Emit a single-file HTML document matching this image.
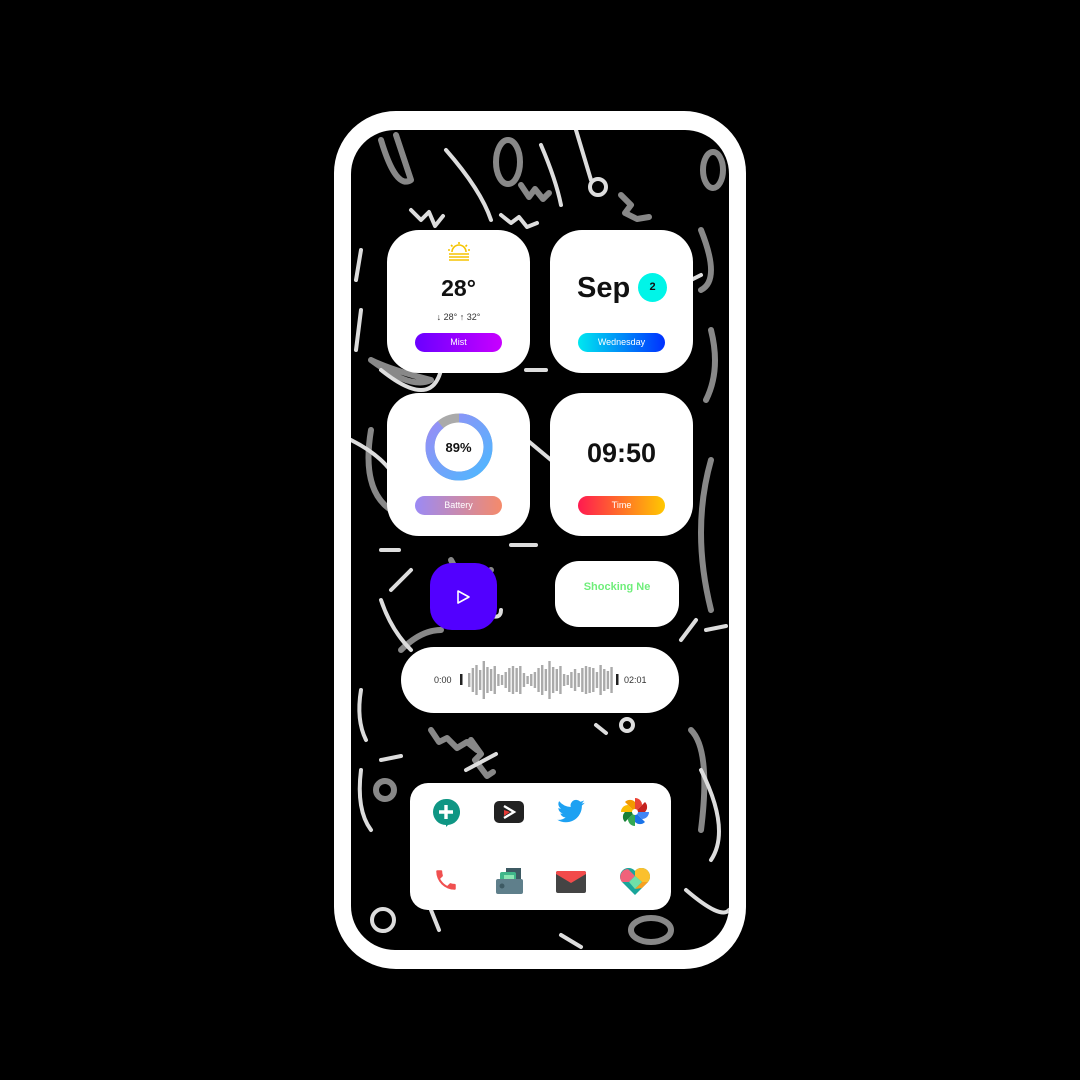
<!DOCTYPE html>
<html><head><meta charset="utf-8"><style>
*{margin:0;padding:0;box-sizing:border-box}
body{width:1080px;height:1080px;background:#000;position:relative;overflow:hidden;font-family:"Liberation Sans",sans-serif}
.frame{position:absolute;left:334px;top:111px;width:412px;height:858px;background:#fff;border-radius:62px}
.screen{position:absolute;left:351px;top:130px;width:378px;height:820px;background:#000;border-radius:44px;overflow:hidden}
.w{position:absolute;background:#fff;border-radius:32px}
.pill{position:absolute;left:28px;width:87px;height:19px;border-radius:10px;color:#fff;font-size:9px;text-align:center;line-height:19px}
.abs{position:absolute}
</style></head><body>
<div class="frame"></div>
<div class="screen">
<svg width="378" height="820" style="position:absolute;left:0;top:0" fill="none" stroke-linecap="round" stroke-linejoin="round">
<g stroke="#888" stroke-width="6">
<path d="M30 10 Q45 60 60 50 Q50 20 45 5"/>
<ellipse cx="157" cy="32" rx="12" ry="22"/>
<path d="M170 55 l8 12 l6 -8 l8 10 l6 -6"/>
<path d="M270 65 l10 10 l-6 8 l12 6 l12 -2"/>
<ellipse cx="362" cy="40" rx="10" ry="18"/>
<path d="M350 100 Q370 150 350 160"/>
<path d="M20 230 Q60 260 80 250 Q40 240 20 230"/>
<path d="M360 200 Q370 240 355 270"/>
<path d="M20 300 Q10 360 40 380"/>
<path d="M50 520 Q70 500 90 500"/>
<path d="M120 610 l10 14 l-6 6 l12 16 l6 -4"/>
<path d="M230 450 l10 20 l-4 6 l12 12"/>
<circle cx="34" cy="660" r="9"/>
<path d="M80 600 l8 12 l8 -4 l10 10 l10 -6 l10 8"/>
<path d="M340 600 Q360 620 350 700"/>
<path d="M360 330 Q340 400 360 480"/>
<path d="M100 430 Q120 470 140 440"/>
<ellipse cx="300" cy="800" rx="20" ry="12"/>
</g>
<g stroke="#ddd" stroke-width="4">
<path d="M95 20 Q130 60 140 90"/>
<path d="M190 15 Q205 50 210 75"/>
<path d="M225 0 L240 50"/>
<circle cx="247" cy="57" r="8"/>
<path d="M60 80 l10 10 l8 -8 l6 14 l8 -10"/>
<path d="M150 85 l10 8 l8 -6 l8 10 l10 -4"/>
<path d="M10 120 L5 150"/>
<path d="M10 180 L5 220"/>
<path d="M30 240 Q80 280 90 240"/>
<path d="M170 305 l30 25"/>
<path d="M0 310 Q40 330 50 360"/>
<path d="M30 420 l18 0"/>
<path d="M160 415 l25 0"/>
<path d="M60 440 l-20 20"/>
<path d="M30 470 Q40 500 60 520"/>
<path d="M100 460 Q150 500 150 480"/>
<path d="M330 510 l15 -20"/>
<path d="M10 560 Q5 590 15 610"/>
<path d="M10 640 Q5 680 20 700"/>
<path d="M30 630 l20 -4"/>
<path d="M115 640 l30 -16"/>
<path d="M245 595 l10 8"/>
<circle cx="276" cy="595" r="6"/>
<path d="M350 640 Q380 700 360 730"/>
<path d="M335 760 Q370 790 378 780"/>
<path d="M300 700 L310 740"/>
<circle cx="32" cy="790" r="11"/>
<path d="M210 805 l20 12"/>
<path d="M80 780 l8 20"/>
<path d="M340 150 l10 -5"/>
<path d="M175 240 l20 0"/>
<path d="M355 500 l20 -4"/>
</g>
</svg>

<div class="w" style="left:36px;top:100px;width:143px;height:143px">
<svg class="abs" style="left:61px;top:12px" width="22" height="20" viewBox="0 0 22 20" stroke="#f5c400" stroke-width="1.6" fill="none"><path d="M4 10a7 7 0 0 1 14 0"/><path d="M11 0v2M3 3l1.5 1.5M19 3l-1.5 1.5M0 8h2M20 8h2"/><path d="M1 12h20M1 15h20M1 18h20"/></svg>
<div class="abs" style="left:0;width:143px;top:45px;text-align:center;font-weight:bold;font-size:23px;color:#111">28°</div>
<div class="abs" style="left:0;width:143px;top:82px;text-align:center;font-size:9px;color:#333">↓ 28° ↑ 32°</div>
<div class="pill" style="top:103px;background:linear-gradient(90deg,#6a00ff,#c800ff)">Mist</div>
</div>
<div class="w" style="left:199px;top:100px;width:143px;height:143px">
<div class="abs" style="left:27px;top:42px;font-weight:bold;font-size:29px;color:#111">Sep</div>
<div class="abs" style="left:88px;top:43px;width:29px;height:29px;border-radius:50%;background:#00f5e8;text-align:center;line-height:29px;font-weight:bold;font-size:11px;color:#111">2</div>
<div class="pill" style="top:103px;background:linear-gradient(90deg,#00e8f0,#0030ff)">Wednesday</div>
</div>
<div class="w" style="left:36px;top:263px;width:143px;height:143px">
<svg class="abs" style="left:38px;top:20px" width="68" height="68" viewBox="0 0 68 68"><defs><linearGradient id="bg" x1="0" y1="1" x2="1" y2="0"><stop offset="0" stop-color="#4db8ff"/><stop offset="1" stop-color="#9a8cf5"/></linearGradient></defs><circle cx="34" cy="34" r="29" fill="none" stroke="#aaa" stroke-width="9"/><circle cx="34" cy="34" r="29" fill="none" stroke="url(#bg)" stroke-width="9" stroke-dasharray="162 200" transform="rotate(-90 34 34)"/></svg>
<div class="abs" style="left:0;width:143px;top:47px;text-align:center;font-weight:bold;font-size:13px;color:#111">89%</div>
<div class="pill" style="top:103px;background:linear-gradient(90deg,#9b8af5,#f58a6a)">Battery</div>
</div>
<div class="w" style="left:199px;top:263px;width:143px;height:143px">
<div class="abs" style="left:0;width:143px;top:45px;text-align:center;font-weight:bold;font-size:27px;color:#111">09:50</div>
<div class="pill" style="top:103px;background:linear-gradient(90deg,#ff1a50,#ffc800)">Time</div>
</div>
<div class="abs" style="left:79px;top:433px;width:67px;height:67px;border-radius:22px;background:#5200ff">
<svg class="abs" style="left:26px;top:26px" width="15" height="16" viewBox="0 0 15 16"><path d="M2 2L13 8 2 14Z" fill="none" stroke="#fff" stroke-width="1.6" stroke-linejoin="round"/></svg>
</div>
<div class="w" style="left:204px;top:431px;width:124px;height:66px;border-radius:24px">
<div class="abs" style="left:0;width:124px;top:20px;text-align:center;font-weight:bold;font-size:11px;color:#6fee7a">Shocking Ne</div>
</div>
<div class="w" style="left:50px;top:517px;width:278px;height:66px;border-radius:33px">
<div class="abs" style="left:33px;top:28px;font-size:9px;color:#333">0:00</div>
<div class="abs" style="left:223px;top:28px;font-size:9px;color:#333">02:01</div>
<svg class="abs" style="left:58px;top:13px" width="162" height="40">
<rect x="1" y="14" width="2.5" height="11" fill="#222"/>
<g fill="#aaa" id="bars"></g>
<rect x="157" y="14" width="2.5" height="11" fill="#222"/>
</svg>
</div>
<div class="w" style="left:59px;top:653px;width:261px;height:127px;border-radius:18px">
<svg class="abs" style="left:22px;top:15px" width="28" height="30" viewBox="0 0 28 30"><path d="M14 1a13 13 0 1 0 0 26l0 2 2-2A13 13 0 0 0 14 1z" fill="#0f9684"/><path d="M14 7v14M7 14h14" stroke="#fff" stroke-width="3.4"/></svg>
<svg class="abs" style="left:84px;top:18px" width="30" height="22" viewBox="0 0 30 22"><rect width="30" height="22" rx="5" fill="#222"/><path d="M10 5l10 6-10 6" fill="none" stroke="#fff" stroke-width="2.4"/><path d="M10 9l6 2-6 4z" fill="#e53935"/></svg>
<svg class="abs" style="left:146px;top:16px" width="30" height="26" viewBox="0 0 24 20"><path d="M23 2.5c-.8.4-1.7.6-2.6.7.9-.6 1.6-1.4 2-2.5-.9.5-1.900.9-2.9 1.1A4.5 4.5 0 0 0 11.8 6 12.8 12.8 0 0 1 2.5 1.3a4.5 4.5 0 0 0 1.4 6c-.7 0-1.4-.2-2-.6 0 2.2 1.6 4 3.6 4.4-.7.2-1.4.2-2 .1.6 1.8 2.2 3.1 4.2 3.1A9 9 0 0 1 1 16.2 12.8 12.8 0 0 0 7.9 18.2c8.3 0 12.8-6.9 12.8-12.8v-.6c.9-.6 1.6-1.4 2.3-2.3z" fill="#1da1f2"/></svg>
<svg class="abs" style="left:210px;top:14px" width="30" height="30" viewBox="-15 -15 30 30"><g><path d="M0 0L0-14A7 7 0 0 1 7-7z" fill="#ea4335"/><path d="M0 0L10-10A7 7 0 0 1 10 0z" fill="#c5221f"/><path d="M0 0L14 0A7 7 0 0 1 7 7z" fill="#4285f4"/><path d="M0 0L10 10A7 7 0 0 1 0 10z" fill="#1a73e8"/><path d="M0 0L0 14A7 7 0 0 1-7 7z" fill="#34a853"/><path d="M0 0L-10 10A7 7 0 0 1-10 0z" fill="#188038"/><path d="M0 0L-14 0A7 7 0 0 1-7-7z" fill="#fbbc04"/><path d="M0 0L-10-10A7 7 0 0 1 0-10z" fill="#f29900"/></g><circle r="3" fill="#fff"/></svg>
<svg class="abs" style="left:23px;top:84px" width="26" height="26" viewBox="0 0 24 24"><path d="M6.6 10.8c1.4 2.8 3.8 5.100 6.6 6.6l2.2-2.2c.3-.3.7-.4 1-.2 1.1.4 2.3.6 3.6.6.6 0 1 .4 1 1V20c0 .6-.4 1-1 1A17 17 0 0 1 3 4c0-.6.4-1 1-1h3.5c.6 0 1 .4 1 1 0 1.3.2 2.5.6 3.6.1.3 0 .7-.2 1z" fill="#f05050"/></svg>
<svg class="abs" style="left:86px;top:85px" width="27" height="26" viewBox="0 0 27 26"><rect x="10" y="0" width="15" height="16" fill="#3d5a63"/><rect x="4" y="4" width="16" height="12" rx="2" fill="#3fb68a"/><rect x="8" y="7" width="10" height="6" fill="#8ae6b3"/><rect x="0" y="11" width="27" height="15" rx="2" fill="#5f7f8b"/><circle cx="6" cy="18" r="2.5" fill="#3d5a63"/></svg>
<svg class="abs" style="left:146px;top:88px" width="30" height="22" viewBox="0 0 30 22"><rect width="30" height="22" rx="2" fill="#444"/><path d="M0 2a2 2 0 0 1 2-2h26a2 2 0 0 1 2 2v1L15 12 0 3z" fill="#f24b4b"/></svg>
<svg class="abs" style="left:210px;top:85px" width="30" height="27" viewBox="0 0 30 27"><path d="M15 27L2 14A8 8 0 0 1 15 3a8 8 0 0 1 13 11z" fill="#19a59a"/><path d="M2 14A8 8 0 0 1 8 1l7 7-6 6z" fill="#f0627a"/><path d="M15 3a8 8 0 0 1 13 11l-6 0-7-6z" fill="#fbc02d"/><path d="M9 14l6-6 7 6-7 7z" fill="#6ee0a8"/><path d="M22 14h6l-6 6-7 1z" fill="#f7a020"/></svg>
</div>
</div>
<script>
var h=[14,24,30,20,38,26,22,28,12,10,16,24,28,24,28,14,8,12,16,24,30,22,38,26,22,28,12,10,16,22,14,24,28,26,24,16,30,22,18,26];
var g=document.getElementById('bars'),s='';
for(var i=0;i<h.length;i++){s+='<rect x="'+(9+i*3.65)+'" y="'+(20-h[i]/2)+'" width="2.4" height="'+h[i]+'"/>';}
g.innerHTML=s;
</script>
</body></html>
